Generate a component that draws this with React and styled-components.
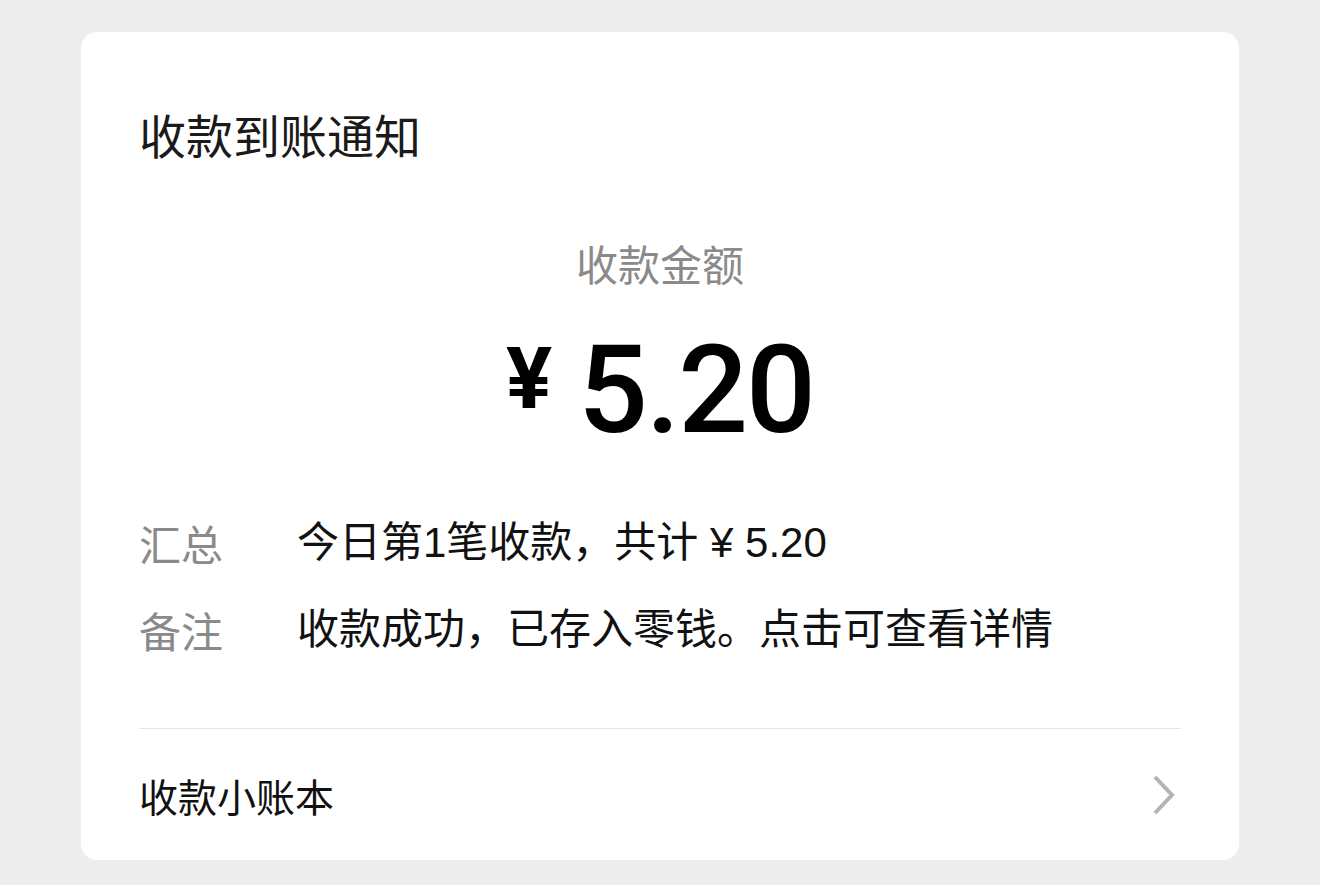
import React from 'react'
import styled, { createGlobalStyle } from 'styled-components'

const GlobalStyle = createGlobalStyle`
  html, body {
    margin: 0;
    padding: 0;
    background: #ededed;
  }
  body {
    font-family: "Noto Sans CJK SC", "Noto Sans", sans-serif;
  }
`

const Page = styled.div`
  min-height: 100vh;
  box-sizing: border-box;
  padding: 32px 81px;
`

const Card = styled.div`
  background: #fff;
  border-radius: 16px;
  height: 828px;
  box-sizing: border-box;
  padding: 72px 58px 0;
  display: flex;
  flex-direction: column;
`

const Title = styled.h1`
  margin: 0;
  font-size: 47px;
  line-height: 60px;
  font-weight: 400;
  color: #1a1a1a;
`

const AmountLabel = styled.div`
  margin-top: 74px;
  text-align: center;
  font-size: 42px;
  line-height: 50px;
  color: #8a8a8a;
`

const Amount = styled.div`
  margin-top: 41px;
  display: flex;
  justify-content: center;
  align-items: flex-start;
  font-family: Roboto, "Liberation Sans", sans-serif;
  color: #000;
`

const Currency = styled.span`
  font-size: 86px;
  line-height: 1;
  font-weight: 700;
  margin-top: 7px;
  margin-right: 26px;
`

const Digits = styled.span`
  font-size: 123px;
  line-height: 1;
  font-weight: 500;
  letter-spacing: -2px;
`

const Rows = styled.div`
  margin-top: 61px;
  display: flex;
  flex-direction: column;
  gap: 27px;
`

const Row = styled.div`
  display: flex;
  font-size: 42px;
  line-height: 60px;
`

const RowLabel = styled.div`
  width: 158px;
  flex-shrink: 0;
  color: #8a8a8a;
`

const RowValue = styled.div`
  font-family: "Liberation Sans", "Noto Sans CJK SC", sans-serif;
  color: #111;
`

const Footer = styled.div`
  margin-top: 68px;
  flex: 1;
  border-top: 1px solid #e6e6e6;
  display: flex;
  align-items: center;
  justify-content: space-between;
  font-size: 39px;
  color: #111;
`

const Chevron = () => (
  <svg width="30" height="44" viewBox="0 0 30 44" style={{ marginRight: 2 }}>
    <path d="M6 4 L23 22 L6 40" fill="none" stroke="#b3b3b3" strokeWidth="4" />
  </svg>
)

export default function App() {
  return (
    <>
      <GlobalStyle />
      <Page>
        <Card>
          <Title>收款到账通知</Title>
          <AmountLabel>收款金额</AmountLabel>
          <Amount>
            <Currency>¥</Currency>
            <Digits>5.20</Digits>
          </Amount>
          <Rows>
            <Row>
              <RowLabel>汇总</RowLabel>
              <RowValue>今日第1笔收款，共计 ¥ 5.20</RowValue>
            </Row>
            <Row>
              <RowLabel>备注</RowLabel>
              <RowValue>收款成功，已存入零钱。点击可查看详情</RowValue>
            </Row>
          </Rows>
          <Footer>
            <span>收款小账本</span>
            <Chevron />
          </Footer>
        </Card>
      </Page>
    </>
  )
}
